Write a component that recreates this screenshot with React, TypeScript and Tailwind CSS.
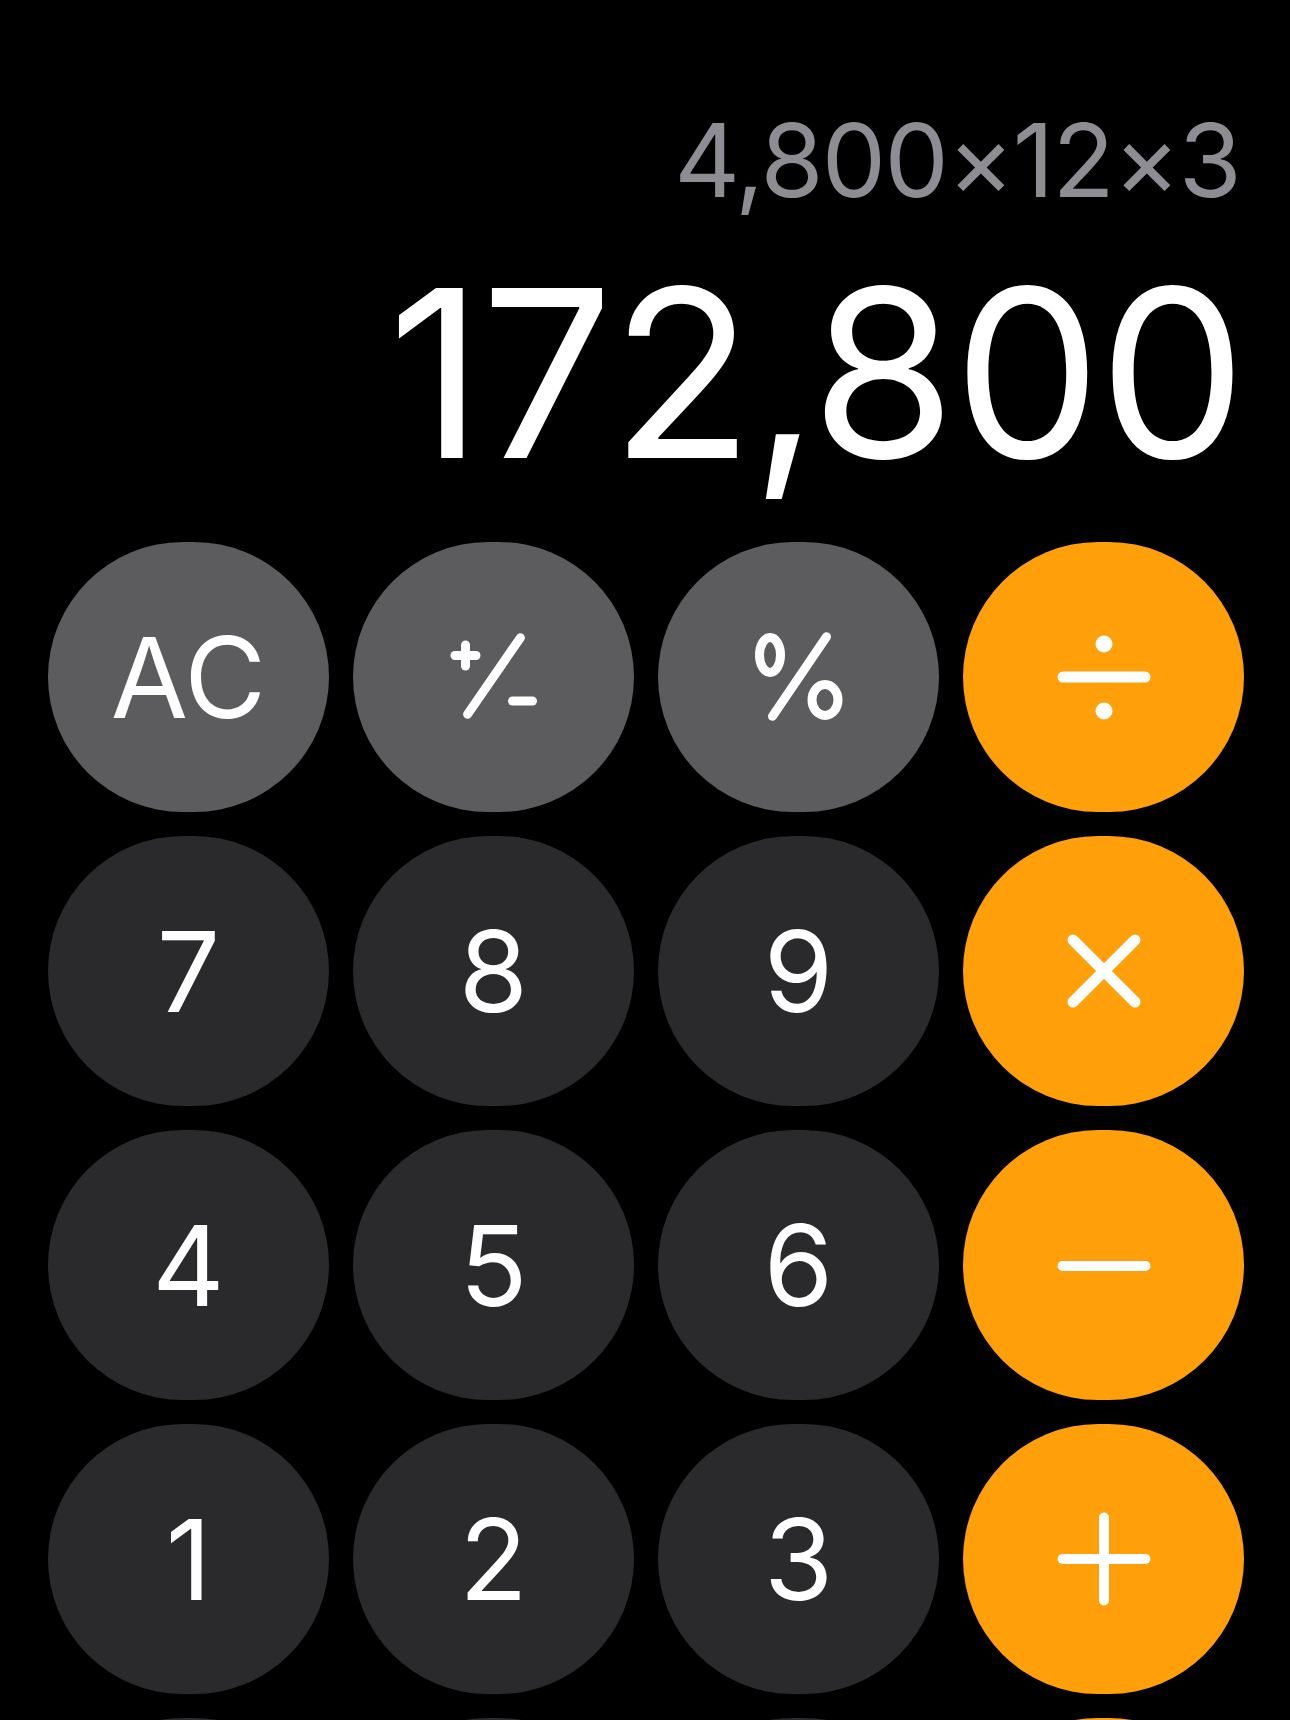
import type { ReactNode } from "react";

type Tone = "fn" | "num" | "op";

const tones: Record<Tone, string> = {
  fn: "bg-[#5c5c5f]",
  num: "bg-[#2a2a2c]",
  op: "bg-[#ff9f0a]",
};

function Glyph({ children }: { children: ReactNode }) {
  return (
    <svg
      width="120"
      height="120"
      viewBox="-60 -60 120 120"
      fill="none"
      stroke="white"
      strokeLinecap="round"
    >
      {children}
    </svg>
  );
}

const divide = (
  <Glyph>
    <line x1="-41" y1="0" x2="41" y2="0" strokeWidth="11" />
    <circle cx="0" cy="-33" r="8.5" fill="white" stroke="none" />
    <circle cx="0" cy="34" r="8.5" fill="white" stroke="none" />
  </Glyph>
);

const times = (
  <Glyph>
    <line x1="-31" y1="-31" x2="31" y2="31" strokeWidth="11" />
    <line x1="31" y1="-31" x2="-31" y2="31" strokeWidth="11" />
  </Glyph>
);

const minus = (
  <Glyph>
    <line x1="-41.5" y1="1" x2="41.5" y2="1" strokeWidth="10" />
  </Glyph>
);

const plus = (
  <Glyph>
    <line x1="-41.5" y1="0" x2="41.5" y2="0" strokeWidth="10" />
    <line x1="0" y1="-41.5" x2="0" y2="41.5" strokeWidth="10" />
  </Glyph>
);

const plusMinus = (
  <Glyph>
    <line x1="-39" y1="-21.5" x2="-18" y2="-21.5" strokeWidth="9" />
    <line x1="-28.5" y1="-32" x2="-28.5" y2="-11" strokeWidth="9" />
    <line x1="26.4" y1="-39.3" x2="-26.4" y2="37.3" strokeWidth="9" />
    <line x1="18.5" y1="24" x2="38.5" y2="24" strokeWidth="9" />
  </Glyph>
);

const percent = (
  <Glyph>
    <ellipse cx="-29" cy="-22" rx="10.5" ry="17.5" strokeWidth="9" />
    <ellipse cx="26" cy="23" rx="13" ry="15.5" strokeWidth="9" />
    <line x1="27.5" y1="-40.3" x2="-26.5" y2="39.3" strokeWidth="9" />
  </Glyph>
);

// last row sits almost entirely below the fold, only its top edge shows
const keys: { label?: ReactNode; tone: Tone; name: string }[] = [
  { label: "AC", tone: "fn", name: "all clear" },
  { label: plusMinus, tone: "fn", name: "plus minus" },
  { label: percent, tone: "fn", name: "percent" },
  { label: divide, tone: "op", name: "divide" },
  { label: "7", tone: "num", name: "7" },
  { label: "8", tone: "num", name: "8" },
  { label: "9", tone: "num", name: "9" },
  { label: times, tone: "op", name: "multiply" },
  { label: "4", tone: "num", name: "4" },
  { label: "5", tone: "num", name: "5" },
  { label: "6", tone: "num", name: "6" },
  { label: minus, tone: "op", name: "subtract" },
  { label: "1", tone: "num", name: "1" },
  { label: "2", tone: "num", name: "2" },
  { label: "3", tone: "num", name: "3" },
  { label: plus, tone: "op", name: "add" },
  { tone: "num", name: "modes" },
  { tone: "num", name: "0" },
  { tone: "num", name: "decimal" },
  { tone: "op", name: "equals" },
];

export default function App() {
  return (
    <div
      className="h-[1720px] w-[1290px] overflow-hidden bg-black text-white"
      style={{ fontFamily: "Inter, 'Noto Sans', sans-serif" }}
    >
      <div className="flex flex-col items-end pt-[109px]">
        <div className="mr-[50px] h-[102px] text-[102px] leading-none tracking-[-0.017em] text-[#8e8d93]">
          4,800×12×3
        </div>
        <div className="mr-[46px] mt-[45px] h-[234px] text-[234px] leading-none tracking-[-0.01em]">
          172,800
        </div>
      </div>

      <div className="mt-[52px] grid grid-cols-[repeat(4,281px)] auto-rows-[270px] gap-x-[24px] gap-y-[24px] pl-[48px]">
        {keys.map((k) => (
          <button
            key={k.name}
            type="button"
            aria-label={k.name}
            className={`flex items-center justify-center rounded-full text-[112px] leading-none text-white ${tones[k.tone]}`}
          >
            {k.label}
          </button>
        ))}
      </div>
    </div>
  );
}
